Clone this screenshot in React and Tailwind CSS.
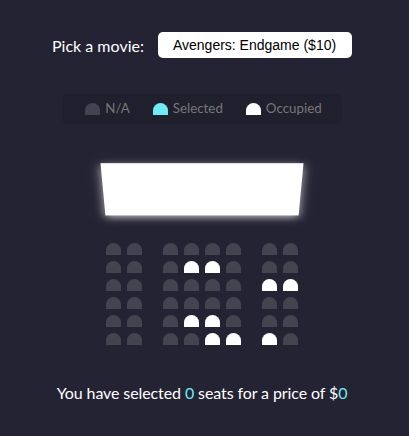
import React from "react";

const OCC = [[], [3, 4], [6, 7], [], [3, 4], [4, 5, 6]];

function Seat({ kind = "na", idx }) {
  const color =
    kind === "occ" ? "bg-white" : kind === "sel" ? "bg-[#6feaf6]" : "bg-[#444451]";
  let m = "m-[3px]";
  if (idx === 1) m = "mt-[3px] mb-[3px] ml-[3px] mr-[18px]";
  if (idx === 6) m = "mt-[3px] mb-[3px] mr-[3px] ml-[18px]";
  return <div className={`h-[12px] w-[15px] rounded-t-[10px] ${color} ${m}`} />;
}

export default function App() {
  return (
    <div
      className="min-h-screen w-full bg-[#242333] text-white flex flex-col items-center pr-[5px] pt-[12px]"
      style={{ fontFamily: "Lato, 'Noto Sans', sans-serif" }}
    >
      <div className="my-[20px] flex items-center">
        <label className="text-[16px] leading-[19px]">Pick a movie:</label>
        <select
          className="ml-[14px] appearance-none bg-white text-black border-0 rounded-[5px] text-[14px] leading-[16px] px-[15px] py-[5px] outline-none"
          style={{ fontFamily: "'Liberation Sans', Arial, sans-serif" }}
          defaultValue="10"
        >
          <option value="10">Avengers: Endgame ($10)</option>
          <option value="12">Joker ($12)</option>
          <option value="8">Toy Story 4 ($8)</option>
          <option value="9">The Lion King ($9)</option>
        </select>
      </div>

      <ul className="mt-[16px] mb-[16px] flex justify-between bg-black/10 px-[10px] py-[5px] rounded-[5px] text-[#777]">
        <li className="mx-[10px] flex items-center">
          <Seat kind="na" />
          <small className="ml-[2px] text-[13.33px]">N/A</small>
        </li>
        <li className="mx-[10px] flex items-center">
          <Seat kind="sel" />
          <small className="ml-[2px] text-[13.33px]">Selected</small>
        </li>
        <li className="mx-[10px] flex items-center">
          <Seat kind="occ" />
          <small className="ml-[2px] text-[13.33px]">Occupied</small>
        </li>
      </ul>

      <div className="mb-[30px] [perspective:1000px]">
        <div className="my-[15px] h-[70px] w-full bg-white [transform:rotateX(-45deg)] shadow-[0_3px_10px_rgba(255,255,255,0.7)]" />
        {OCC.map((occ, r) => (
          <div key={r} className="flex">
            {Array.from({ length: 8 }).map((_, i) => (
              <Seat key={i} idx={i} kind={occ.includes(i) ? "occ" : "na"} />
            ))}
          </div>
        ))}
      </div>

      <p className="my-[5px] text-[16px] leading-[19px] tracking-[-0.1px]">
        You have selected <span className="text-[#6feaf6]">0</span> seats for a price of $
        <span className="text-[#6feaf6]">0</span>
      </p>
    </div>
  );
}
